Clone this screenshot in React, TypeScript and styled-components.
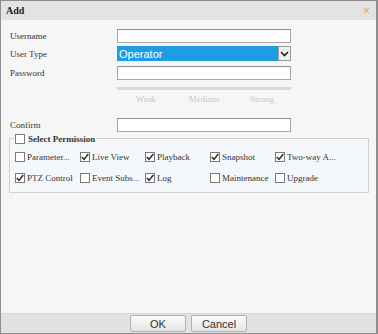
import React from 'react'
import styled, { createGlobalStyle } from 'styled-components'

const GlobalStyle = createGlobalStyle`
    html, body {
        margin: 0;
        padding: 0;
        background: #ffffff;
    }
`

const Dialog = styled.div`
    width: 378px;
    height: 334px;
    box-sizing: border-box;
    border: 1px solid #8e8e8e;
    border-right-width: 2px;
    background: #f6f6f6;
    display: flex;
    flex-direction: column;
    font-family: "Liberation Serif", "DejaVu Serif", serif;
`

const TitleBar = styled.div`
    height: 19px;
    flex: none;
    background: #e3e3e3;
    display: flex;
    align-items: center;
    justify-content: space-between;
    padding: 0 6px 0 5px;
    font-size: 10px;
    font-weight: bold;
    color: #222;
`

const Close = styled.span`
    font-family: "Liberation Sans", Arial, sans-serif;
    font-size: 12px;
    font-weight: normal;
    color: #f0a640;
    line-height: 1;
`

const Body = styled.div`
    flex: 1;
    padding: 9px 0 0 9px;
`

const Row = styled.div<{ $h: number; $mt?: number }>`
    display: grid;
    grid-template-columns: 107px 174px;
    align-items: center;
    height: ${p => p.$h}px;
    margin-top: ${p => p.$mt ?? 0}px;
`

const Label = styled.span`
    font-size: 9px;
    color: #333;
`

const TextInput = styled.div`
    height: 14px;
    box-sizing: border-box;
    background: #fff;
    border: 1px solid #a4a4a4;
    border-top-color: #8c8c8c;
`

const Select = styled.div`
    height: 15px;
    box-sizing: border-box;
    background: #1e9de4;
    display: flex;
    align-items: center;
    justify-content: space-between;
    font-family: "Liberation Sans", Arial, sans-serif;
    font-size: 11px;
    color: #fff;
    padding-left: 2px;
`

const Arrow = styled.div`
    width: 13px;
    height: 15px;
    box-sizing: border-box;
    background: #f0f0f0;
    border: 1px solid #9a9a9a;
    display: grid;
    place-items: center;
`

const StrengthBar = styled.div`
    height: 3px;
    background: #d8d8d8;
`

const StrengthLabels = styled.div`
    display: grid;
    grid-template-columns: repeat(3, 1fr);
    text-align: center;
    font-size: 9px;
    color: #c8c8c8;
`

const Group = styled.fieldset`
    margin: 1px 0 0 -1px;
    width: 360px;
    box-sizing: border-box;
    border: 1px solid #c9d3dc;
    padding: 0 0 4px 5px;
    background: #f5f8fa;
`

const Legend = styled.legend`
    padding: 0 1px;
    margin-left: -1px;
    display: flex;
    align-items: center;
    gap: 3px;
    height: 11px;
    font-size: 9px;
    font-weight: bold;
    color: #333;
`

const PermGrid = styled.div`
    display: grid;
    grid-template-columns: repeat(5, 65px);
    grid-auto-rows: 21px;
    margin-top: 2px;
`

const Perm = styled.div`
    display: flex;
    align-items: center;
    gap: 2px;
    font-size: 9px;
    color: #333;
    white-space: nowrap;
`

const Box = styled.span`
    width: 10px;
    height: 10px;
    box-sizing: border-box;
    flex: none;
    background: #fff;
    border: 1px solid #7a7a7a;
    display: grid;
    place-items: center;
`

const Footer = styled.div`
    height: 19px;
    flex: none;
    background: #e2e2e2;
    border-top: 1px solid #d6d6d6;
    display: flex;
    justify-content: center;
    align-items: center;
    gap: 5px;
`

const Button = styled.button`
    width: 56px;
    height: 17px;
    padding: 0;
    box-sizing: border-box;
    border: 1px solid #b0b0b0;
    border-radius: 2px;
    background: linear-gradient(#fbfbfb, #e4e4e4);
    font-family: "Liberation Sans", Arial, sans-serif;
    font-size: 11px;
    color: #333;
`

const Check: React.FC<{ on?: boolean }> = ({ on }) => (
    <Box>
        {on && (
            <svg width="8" height="8" viewBox="0 0 8 8">
                <path d="M0.8 4 L3 6.4 L7.3 1" fill="none" stroke="#2a2a2a" strokeWidth="1.5" />
            </svg>
        )}
    </Box>
)

const perms: [string, boolean][] = [
    ['Parameter...', false],
    ['Live View', true],
    ['Playback', true],
    ['Snapshot', true],
    ['Two-way A...', true],
    ['PTZ Control', true],
    ['Event Subs...', false],
    ['Log', true],
    ['Maintenance', false],
    ['Upgrade', false],
]

const App: React.FC = () => {
    return (
        <>
            <GlobalStyle />
            <Dialog>
                <TitleBar>
                    Add
                    <Close>×</Close>
                </TitleBar>
                <Body>
                    <Row $h={14}>
                        <Label>Username</Label>
                        <TextInput />
                    </Row>
                    <Row $h={15} $mt={3}>
                        <Label>User Type</Label>
                        <Select>
                            Operator
                            <Arrow>
                                <svg width="9" height="6" viewBox="0 0 9 6">
                                    <path d="M1 1 L4.5 4.5 L8 1" fill="none" stroke="#222" strokeWidth="1.6" />
                                </svg>
                            </Arrow>
                        </Select>
                    </Row>
                    <Row $h={14} $mt={5}>
                        <Label>Password</Label>
                        <TextInput />
                    </Row>
                    <Row $h={3} $mt={7}>
                        <span />
                        <StrengthBar />
                    </Row>
                    <Row $h={10} $mt={4}>
                        <span />
                        <StrengthLabels>
                            <span>Weak</span>
                            <span>Medium</span>
                            <span>Strong</span>
                        </StrengthLabels>
                    </Row>
                    <Row $h={14} $mt={14}>
                        <Label>Confirm</Label>
                        <TextInput />
                    </Row>
                    <Group>
                        <Legend>
                            <Check />
                            Select Permission
                        </Legend>
                        <PermGrid>
                            {perms.map(([name, on]) => (
                                <Perm key={name}>
                                    <Check on={on} />
                                    {name}
                                </Perm>
                            ))}
                        </PermGrid>
                    </Group>
                </Body>
                <Footer>
                    <Button>OK</Button>
                    <Button>Cancel</Button>
                </Footer>
            </Dialog>
        </>
    )
}

export default App
